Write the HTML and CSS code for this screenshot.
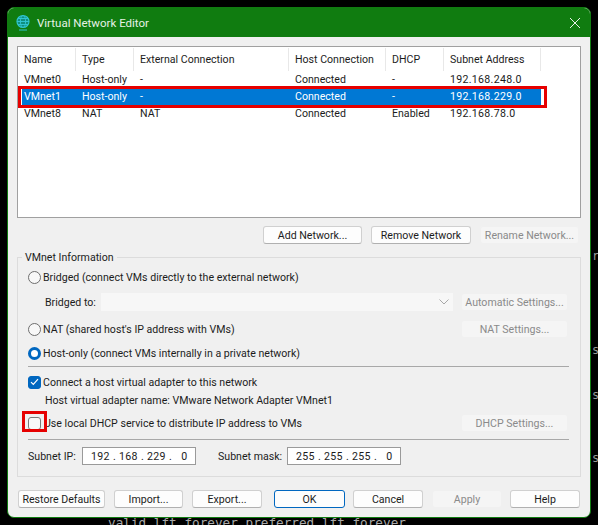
FILE: index.html
```html
<!DOCTYPE html>
<html>
<head>
  <meta charset="UTF-8">
  <title>Virtual Network Editor</title>
  <link rel="stylesheet" href="styles.css">
</head>
<body>
  <div class="terminal-line">valid_lft forever preferred_lft forever</div>
  <span class="terminal-bit bit-a">r0</span>
  <span class="terminal-bit bit-b">s</span>
  <span class="terminal-bit bit-c">s3</span>
  <span class="terminal-bit bit-d">s</span>

  <div class="window">
    <div class="titlebar">
      <svg class="globe" width="16" height="18" viewBox="0 0 16 18">
        <circle cx="8" cy="7.5" r="6" fill="#0f8f7f" stroke="#2fc4cf" stroke-width="1.2"/>
        <ellipse cx="8" cy="7.5" rx="2.6" ry="6" fill="none" stroke="#2fc4cf"/>
        <path d="M2 7.5h12M3 4.5h10M3 10.5h10" stroke="#2fc4cf" fill="none"/>
        <path d="M4 16h8" stroke="#2fc4cf" stroke-width="1.2"/>
      </svg>
      <span class="title">Virtual Network Editor</span>
      <svg class="close" width="10" height="10" viewBox="0 0 10 10">
        <path d="M0 0L10 10M10 0L0 10" stroke="#e8f2e8" stroke-width="1"/>
      </svg>
    </div>

    <div class="content">
      <div class="list">
        <div class="list-row list-head">
          <span>Name</span><span>Type</span><span>External Connection</span><span>Host Connection</span><span>DHCP</span><span>Subnet Address</span>
        </div>
        <div class="list-row">
          <span>VMnet0</span><span>Host-only</span><span>-</span><span>Connected</span><span>-</span><span class="ip">192.168.248.0</span>
        </div>
        <div class="list-row selected">
          <span>VMnet1</span><span>Host-only</span><span>-</span><span>Connected</span><span>-</span><span class="ip">192.168.229.0</span>
        </div>
        <div class="list-row">
          <span>VMnet8</span><span>NAT</span><span>NAT</span><span>Connected</span><span>Enabled</span><span class="ip">192.168.78.0</span>
        </div>
        <div class="red-box row-mark"></div>
      </div>

      <div class="list-actions">
        <button class="btn add-btn">Add Network...</button>
        <button class="btn remove-btn">Remove Network</button>
        <button class="btn rename-btn" disabled>Rename Network...</button>
      </div>

      <div class="group">
        <div class="legend">VMnet Information</div>

        <div class="line first">
          <span class="radio"></span><span>Bridged (connect VMs directly to the external network)</span>
        </div>
        <div class="line sub gap-7">
          <span class="bridged-label">Bridged to:</span>
          <div class="select">
            <svg width="10" height="6" viewBox="0 0 10 6"><path d="M0.5 0.5L5 5L9.5 0.5" fill="none" stroke="#a8a8a8"/></svg>
          </div>
          <button class="btn side-btn" disabled>Automatic Settings...</button>
        </div>
        <div class="line gap-9">
          <span class="radio"></span><span>NAT (shared host's IP address with VMs)</span>
          <button class="btn side-btn push" disabled>NAT Settings...</button>
        </div>
        <div class="line gap-6">
          <span class="radio on"></span><span>Host-only (connect VMs internally in a private network)</span>
        </div>
        <div class="rule"></div>
        <div class="line gap-6">
          <span class="check on">
            <svg width="9" height="8" viewBox="0 0 9 8"><path d="M1 4.2L3.3 6.5L8 1.2" fill="none" stroke="#fff" stroke-width="1.2"/></svg>
          </span><span>Connect a host virtual adapter to this network</span>
        </div>
        <div class="line sub">Host virtual adapter name: VMware Network Adapter VMnet1</div>
        <div class="line gap-5">
          <span class="check">
            <span class="red-box check-mark"></span>
          </span><span class="dhcp-text">Use local DHCP service to distribute IP address to VMs</span>
          <button class="btn side-btn push" disabled>DHCP Settings...</button>
        </div>
        <div class="rule rule-2"></div>
        <div class="line gap-7">
          <span class="ip-label">Subnet IP:</span>
          <div class="ip-input"><span>192</span><i>.</i><span>168</span><i>.</i><span>229</span><i>.</i><span>0</span></div>
          <span class="mask-label">Subnet mask:</span>
          <div class="ip-input"><span>255</span><i>.</i><span>255</span><i>.</i><span>255</span><i>.</i><span>0</span></div>
        </div>
      </div>

      <div class="footer">
        <button class="btn restore-btn">Restore Defaults</button>
        <button class="btn import-btn">Import...</button>
        <button class="btn export-btn">Export...</button>
        <button class="btn ok-btn">OK</button>
        <button class="btn cancel-btn">Cancel</button>
        <button class="btn apply-btn" disabled>Apply</button>
        <button class="btn help-btn">Help</button>
      </div>
    </div>
  </div>
</body>
</html>
```

FILE: styles.css
```css
html, body { margin: 0; height: 525px; overflow: hidden; }
body { position: relative; background: #000; font-family: Roboto, Arial, sans-serif; font-size: 10.6px; color: #1c1c1c; }

.terminal-line { position: absolute; left: 108px; top: 515px; font-family: "DejaVu Sans Mono", monospace; font-size: 12.7px; line-height: 15px; color: #a8a8a8; white-space: pre; }
.terminal-bit { position: absolute; left: 592px; font-family: "DejaVu Sans Mono", monospace; font-size: 12px; line-height: 14px; color: #999; }
.bit-a { top: 249px; }
.bit-b { top: 343px; }
.bit-c { top: 388px; }
.bit-d { top: 451px; }

.window { position: absolute; left: 7px; top: 7px; width: 584px; height: 511px; box-sizing: border-box; background: #f0f0f0; border: 1px solid #107c10; border-radius: 7px; overflow: hidden; }

.titlebar { display: flex; align-items: center; height: 29px; padding: 0 10px 0 7px; background: #107c10; color: #e6f1e6; font-size: 11.5px; }
.globe { margin-right: 6px; }
.title { flex: 1; }

.content { padding: 9px 9px 0; }

.list { position: relative; height: 170px; background: #fff; border: 1px solid #a0a0a0; }
.list-row { display: grid; grid-template-columns: 54px 58px 155px 97px 58px 97px; height: 17px; margin-left: 4px; width: 519px; align-items: center; white-space: nowrap; }
.list-row span { padding-left: 6px; }
.list-row span:first-child { padding-left: 2px; }
.list-head { height: 24px; }
.list-head span { border-right: 1px solid #e8e8e8; height: 23px; line-height: 23px; }
.selected { background: #0078d4; color: #fff; }
.ip { letter-spacing: 0.3px; }

.red-box { position: absolute; box-sizing: border-box; border: 3px solid #e60000; }
.row-mark { left: 0; top: 39px; width: 529px; height: 22px; }

.list-actions { display: flex; justify-content: flex-end; gap: 9px; margin-top: 8px; padding-right: 2px; }

.btn { box-sizing: border-box; height: 18px; padding: 0; background: #fdfdfd; border: 1px solid #d0d0d0; border-bottom-color: #b0b0b0; border-radius: 3px; font: inherit; color: #1c1c1c; white-space: nowrap; }
.btn:disabled { background: #f5f5f5; border-color: #f0f0f0; color: #8a8a8a; }
.add-btn { width: 99px; }
.remove-btn { width: 100px; }
.rename-btn { width: 99px; }

.group { box-sizing: border-box; height: 220px; margin-top: 13px; padding: 0 12px 0 10px; border: 1px solid #dcdcdc; }
.legend { width: fit-content; height: 16px; line-height: 16px; margin: -8px 0 0 -6px; padding: 0 3px; background: #f0f0f0; }

.line { display: flex; align-items: center; height: 18px; white-space: nowrap; }
.first { margin-top: 2px; }
.gap-5 { margin-top: 5px; }
.gap-6 { margin-top: 6px; }
.gap-7 { margin-top: 7px; }
.gap-9 { margin-top: 9px; }
.sub { padding-left: 17px; }

.radio { box-sizing: border-box; width: 13px; height: 13px; margin-right: 2px; background: #f8f8f8; border: 1px solid #6e6e6e; border-radius: 50%; }
.radio.on { background: #fff; border: 3.5px solid #0067c0; }

.check { position: relative; display: flex; align-items: center; justify-content: center; box-sizing: border-box; width: 13px; height: 13px; margin-right: 2px; background: #f8f8f8; border: 1px solid #7a7a7a; border-radius: 3px; }
.check.on { background: #0067c0; border-color: #0067c0; }
.check-mark { left: -7px; top: -7px; width: 25px; height: 21px; }
.dhcp-text { margin-left: 1px; }

.bridged-label { width: 56px; }
.select { display: flex; align-items: center; justify-content: flex-end; box-sizing: border-box; width: 352px; height: 18px; padding-right: 4px; background: #f7f7f7; }
.side-btn { width: 107px; margin-left: 8px; }
.push { margin-left: auto; }

.rule { height: 1px; margin: 4px -1px 0 0; background: #a8a8a8; }
.rule-2 { margin-top: 7px; }

.ip-label { width: 54px; }
.mask-label { width: 69px; margin-left: 22px; }
.ip-input { display: flex; align-items: center; box-sizing: border-box; width: 114px; height: 18px; padding-left: 8px; background: #fff; border: 1px solid #9a9a9a; letter-spacing: 0.3px; }
.ip-input span { width: 19px; text-align: center; }
.ip-input i { width: 9px; font-style: normal; text-align: center; }

.footer { display: flex; margin-top: 13px; padding-left: 1px; }
.footer .btn { height: 18px; margin-right: 9px; }
.restore-btn { width: 87px; }
.import-btn { width: 69px; }
.export-btn { width: 70px; margin-right: 12px !important; }
.ok-btn { width: 71px; border-color: #0067c0 !important; margin-right: 8px !important; }
.cancel-btn { width: 70px; }
.apply-btn { width: 70px; margin-right: 8px !important; }
.help-btn { width: 70px; margin-right: 0 !important; }
```
